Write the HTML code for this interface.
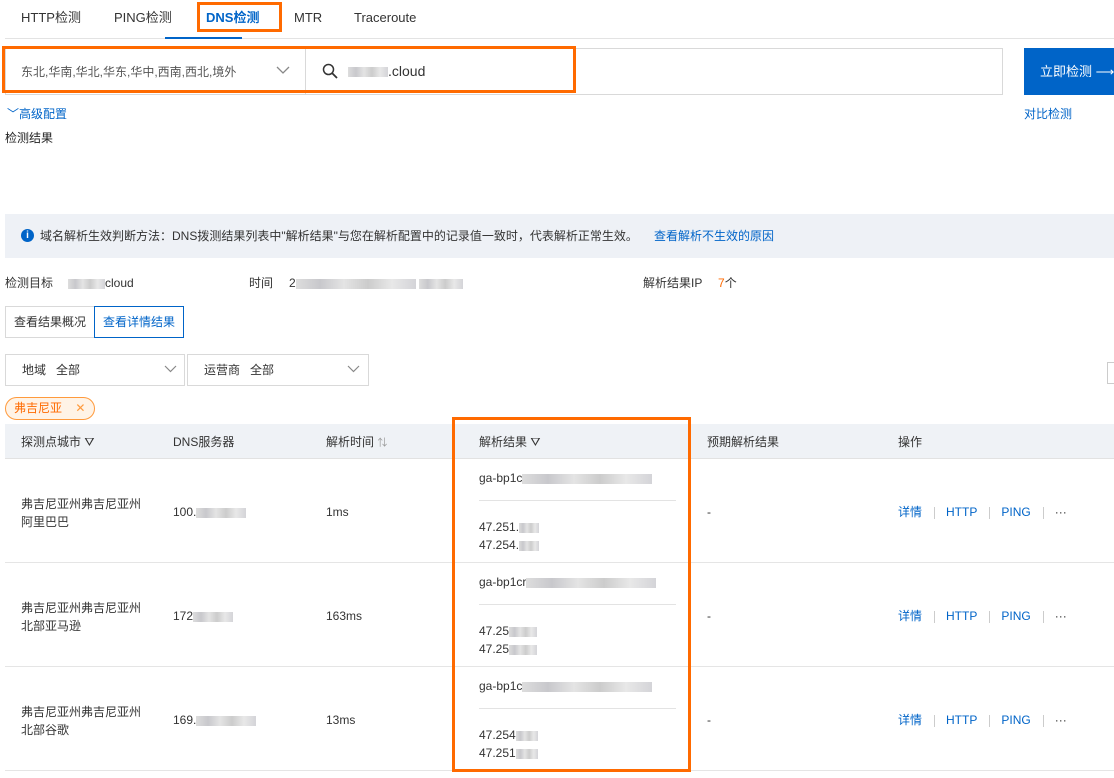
<!DOCTYPE html>
<html><head><meta charset="utf-8"><style>
*{box-sizing:border-box;margin:0;padding:0}
body{width:1114px;height:778px;overflow:hidden;background:#fff;font-family:"Liberation Sans","Noto Sans CJK SC",sans-serif;font-size:12px;color:#333;position:relative}
.a{position:absolute;white-space:nowrap;line-height:16px}
.blur{display:inline-block;height:10px;background:linear-gradient(90deg,#ddd,#c8c8cc,#e4e4e4,#ccc,#e8e8e8,#d4d4d8);vertical-align:middle}
.blue{color:#0064c8}
.ob{position:absolute;border:3px solid #ff6a00}
.row{position:absolute;left:5px;width:1109px;border-bottom:1px solid #e5e5e5}
.sep{display:inline-block;width:1px;height:12px;background:#ccc;margin:0 11px 0 12px;vertical-align:middle}
.tab{font-size:13px;top:9px;line-height:18px}
</style></head><body>
<div class="a tab" style="left:21px">HTTP检测</div>
<div class="a tab" style="left:114px">PING检测</div>
<div class="a tab" style="left:206px;font-weight:bold;color:#0064c8">DNS检测</div>
<div class="a tab" style="left:294px">MTR</div>
<div class="a tab" style="left:354px">Traceroute</div>
<div class="a" style="left:5px;top:38px;width:1109px;height:1px;background:#e3e3e3"></div>
<div class="a" style="left:165px;top:37px;width:77px;height:2px;background:#0064c8"></div>
<div class="ob" style="left:197px;top:2px;width:85px;height:30px"></div>

<div class="a" style="left:5px;top:48px;width:998px;height:47px;border:1px solid #d9d9d9"></div>
<div class="a" style="left:305px;top:48px;width:1px;height:47px;background:#d9d9d9"></div>
<div class="a" style="left:21px;top:64px;color:#555">东北,华南,华北,华东,华中,西南,西北,境外</div>
<svg class="a" style="left:276px;top:66px" width="14" height="9"><path d="M1 1l6 6 6-6" stroke="#888" fill="none" stroke-width="1.3"/></svg>
<svg class="a" style="left:322px;top:63px" width="16" height="16"><circle cx="6.5" cy="6.5" r="5" stroke="#333" fill="none" stroke-width="1.5"/><path d="M10 10l5 5" stroke="#333" stroke-width="1.8"/></svg>
<div class="a" style="left:348px;top:63px;font-size:14px"><span class="blur" style="width:40px"></span>.cloud</div>
<div class="ob" style="left:2px;top:46px;width:574px;height:47px"></div>
<div class="a" style="left:1024px;top:48px;width:90px;height:47px;background:#0064c8;color:#fff;font-size:13px;line-height:47px;padding-left:16px">立即检测 ⟶</div>
<div class="a blue" style="left:7px;top:106px">﹀高级配置</div>
<div class="a blue" style="left:1024px;top:106px">对比检测</div>
<div class="a" style="left:5px;top:130px;color:#222">检测结果</div>

<div class="a" style="left:5px;top:214px;width:1109px;height:44px;background:#eef1f6"></div>
<div class="a" style="left:21px;top:229px;width:13px;height:13px;border-radius:50%;background:#0064c8;color:#fff;font-size:10px;line-height:13px;text-align:center;font-weight:bold">i</div>
<div class="a" style="left:40px;top:228px">域名解析生效判断方法：DNS拨测结果列表中"解析结果"与您在解析配置中的记录值一致时，代表解析正常生效。</div>
<div class="a blue" style="left:654px;top:228px">查看解析不生效的原因</div>

<div class="a" style="left:5px;top:275px">检测目标</div>
<div class="a" style="left:68px;top:275px"><span class="blur" style="width:37px"></span>cloud</div>
<div class="a" style="left:249px;top:275px">时间</div>
<div class="a" style="left:289px;top:275px">2<span class="blur" style="width:120px"></span> <span class="blur" style="width:44px"></span></div>
<div class="a" style="left:643px;top:275px">解析结果IP</div>
<div class="a" style="left:718px;top:275px;color:#ff6a00">7<span style="color:#333">个</span></div>

<div class="a" style="left:5px;top:306px;width:90px;height:32px;border:1px solid #d9d9d9;line-height:30px;text-align:center">查看结果概况</div>
<div class="a" style="left:94px;top:306px;width:90px;height:32px;border:1px solid #0064c8;line-height:30px;text-align:center;color:#0064c8">查看详情结果</div>

<div class="a" style="left:5px;top:354px;width:180px;height:32px;border:1px solid #d9d9d9;line-height:30px;padding-left:16px">地域&nbsp;&nbsp;&nbsp;全部</div>
<svg class="a" style="left:164px;top:365px" width="13" height="8"><path d="M1 1l5.5 5.5 5.5-5.5" stroke="#888" fill="none" stroke-width="1.2"/></svg>
<div class="a" style="left:187px;top:354px;width:182px;height:32px;border:1px solid #d9d9d9;line-height:30px;padding-left:16px">运营商&nbsp;&nbsp;&nbsp;全部</div>
<svg class="a" style="left:347px;top:365px" width="13" height="8"><path d="M1 1l5.5 5.5 5.5-5.5" stroke="#888" fill="none" stroke-width="1.2"/></svg>
<div class="a" style="left:1107px;top:362px;width:10px;height:22px;border:1px solid #ccc"></div>
<div class="a" style="left:5px;top:397px;width:90px;height:23px;border:1px solid #ff9a3c;border-radius:12px;background:#fff3e6;color:#ff6a00;line-height:21px;padding-left:8px">弗吉尼亚 <span style="margin-left:10px;color:#ff9a3c">✕</span></div>

<div class="a" style="left:5px;top:424px;width:1109px;height:35px;background:#eff2f6;border-bottom:1px solid #e2e2e2"></div>
<div class="a" style="left:21px;top:434px">探测点城市 ⛛</div>
<div class="a" style="left:173px;top:434px">DNS服务器</div>
<div class="a" style="left:326px;top:434px">解析时间 <span style="color:#999;font-size:10px">⇅</span></div>
<div class="a" style="left:479px;top:434px">解析结果 ⛛</div>
<div class="a" style="left:707px;top:434px">预期解析结果</div>
<div class="a" style="left:898px;top:434px">操作</div>

<div class="row" style="top:459px;height:104px"></div>
<div class="row" style="top:563px;height:104px"></div>
<div class="row" style="top:667px;height:104px"></div>

<div class="a" style="left:21px;top:495px;line-height:18px">弗吉尼亚州弗吉尼亚州<br>阿里巴巴</div>
<div class="a" style="left:173px;top:504px">100.<span class="blur" style="width:50px"></span></div>
<div class="a" style="left:326px;top:504px">1ms</div>
<div class="a" style="left:479px;top:470px">ga-bp1c<span class="blur" style="width:130px"></span></div>
<div class="a" style="left:479px;top:500px;width:197px;height:1px;background:#e3e3e3"></div>
<div class="a" style="left:479px;top:518px;line-height:18px">47.251.<span class="blur" style="width:20px"></span><br>47.254.<span class="blur" style="width:20px"></span></div>
<div class="a" style="left:707px;top:504px">-</div>
<div class="a" style="left:898px;top:504px"><span class="blue">详情</span><span class="sep"></span><span class="blue">HTTP</span><span class="sep"></span><span class="blue">PING</span><span class="sep"></span>···</div>

<div class="a" style="left:21px;top:599px;line-height:18px">弗吉尼亚州弗吉尼亚州<br>北部亚马逊</div>
<div class="a" style="left:173px;top:608px">172<span class="blur" style="width:40px"></span></div>
<div class="a" style="left:326px;top:608px">163ms</div>
<div class="a" style="left:479px;top:574px">ga-bp1cr<span class="blur" style="width:130px"></span></div>
<div class="a" style="left:479px;top:604px;width:197px;height:1px;background:#e3e3e3"></div>
<div class="a" style="left:479px;top:622px;line-height:18px">47.25<span class="blur" style="width:28px"></span><br>47.25<span class="blur" style="width:28px"></span></div>
<div class="a" style="left:707px;top:608px">-</div>
<div class="a" style="left:898px;top:608px"><span class="blue">详情</span><span class="sep"></span><span class="blue">HTTP</span><span class="sep"></span><span class="blue">PING</span><span class="sep"></span>···</div>

<div class="a" style="left:21px;top:703px;line-height:18px">弗吉尼亚州弗吉尼亚州<br>北部谷歌</div>
<div class="a" style="left:173px;top:712px">169.<span class="blur" style="width:60px"></span></div>
<div class="a" style="left:326px;top:712px">13ms</div>
<div class="a" style="left:479px;top:678px">ga-bp1c<span class="blur" style="width:130px"></span></div>
<div class="a" style="left:479px;top:708px;width:197px;height:1px;background:#e3e3e3"></div>
<div class="a" style="left:479px;top:726px;line-height:18px">47.254<span class="blur" style="width:22px"></span><br>47.251<span class="blur" style="width:22px"></span></div>
<div class="a" style="left:707px;top:712px">-</div>
<div class="a" style="left:898px;top:712px"><span class="blue">详情</span><span class="sep"></span><span class="blue">HTTP</span><span class="sep"></span><span class="blue">PING</span><span class="sep"></span>···</div>

<div class="ob" style="left:452px;top:417px;width:239px;height:355px"></div>
</body></html>
